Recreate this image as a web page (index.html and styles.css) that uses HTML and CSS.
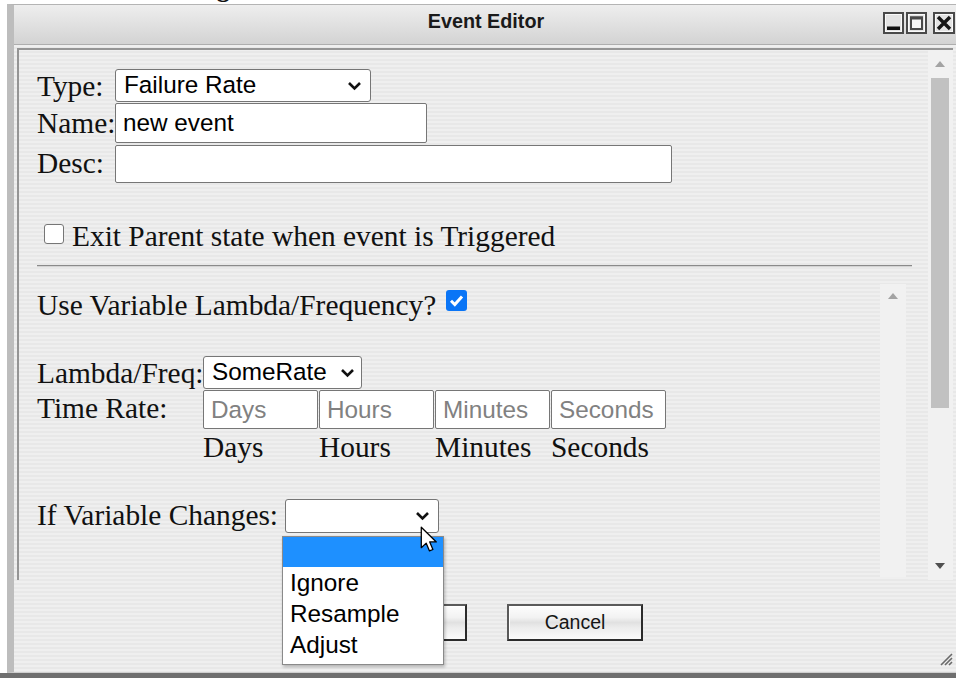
FILE: index.html
```html
<!DOCTYPE html>
<html lang="en">
<head>
<meta charset="utf-8">
<title>Event Editor</title>
<link rel="stylesheet" href="styles.css">
</head>
<body>
<div class="page-head"><span>Event Editing</span></div>

<div class="window">
  <div class="titlebar">
    <div></div>
    <div class="title">Event Editor</div>
    <div class="controls">
      <svg class="ctl" width="21" height="22" viewBox="0 0 21 22">
        <rect x="1" y="1" width="19" height="20" fill="#e4e4e4" stroke="#4a4a4a" stroke-width="2"/>
        <rect x="2.5" y="2.5" width="16" height="17" fill="none" stroke="#fafafa" stroke-width="1"/>
        <rect x="4" y="14.5" width="13" height="3.5" fill="#111"/>
      </svg>
      <svg class="ctl" width="21" height="22" viewBox="0 0 21 22">
        <rect x="1" y="1" width="19" height="20" fill="#e4e4e4" stroke="#4a4a4a" stroke-width="2"/>
        <rect x="2.5" y="2.5" width="16" height="17" fill="none" stroke="#fafafa" stroke-width="1"/>
        <rect x="5" y="5.5" width="11" height="11.5" fill="#f7f7f7" stroke="#4a4a4a" stroke-width="2"/>
        <rect x="4" y="4.5" width="13" height="3" fill="#4a4a4a"/>
      </svg>
      <svg class="ctl ctl-close" width="22" height="22" viewBox="0 0 22 22">
        <rect x="1" y="1" width="20" height="20" fill="#e4e4e4" stroke="#4a4a4a" stroke-width="2"/>
        <rect x="2.5" y="2.5" width="17" height="17" fill="none" stroke="#fafafa" stroke-width="1"/>
        <path d="M5 5 L17 17 M17 5 L5 17" stroke="#161616" stroke-width="3.4"/>
      </svg>
    </div>
  </div>

  <div class="window-body">
    <div class="frame">
      <div class="frame-main">
        <div class="fields">
          <div class="lbl">Type:</div>
          <div class="select sel-type">
            <span>Failure Rate</span>
            <svg class="chev" width="15" height="10" viewBox="0 0 15 10"><path d="M2 2 L7.5 7.5 L13 2" fill="none" stroke="#111" stroke-width="2.6"/></svg>
          </div>
          <div class="lbl">Name:</div>
          <input class="text in-name" type="text" value="new event">
          <div class="lbl">Desc:</div>
          <input class="text in-desc" type="text" value="">
        </div>

        <div class="check-row">
          <span class="box"></span>
          <span>Exit Parent state when event is Triggered</span>
        </div>

        <hr class="sep">

        <div class="sub">
          <div class="sub-main">
            <div class="q-row">
              <span>Use Variable Lambda/Frequency?</span>
              <span class="box checked">
                <svg width="21" height="21" viewBox="0 0 21 21"><path d="M5 10.8 L8.8 14.5 L16 6.5" fill="none" stroke="#fff" stroke-width="3"/></svg>
              </span>
            </div>

            <div class="lambda-row">
              <div class="lbl-wide">Lambda/Freq:</div>
              <div class="select sel-lambda">
                <span>SomeRate</span>
                <svg class="chev" width="15" height="10" viewBox="0 0 15 10"><path d="M2 2 L7.5 7.5 L13 2" fill="none" stroke="#111" stroke-width="2.6"/></svg>
              </div>
            </div>

            <div class="time-row">
              <div class="lbl-wide lbl-time">Time Rate:</div>
              <div class="time-inputs">
                <input class="text t-in" type="text" placeholder="Days">
                <input class="text t-in" type="text" placeholder="Hours">
                <input class="text t-in" type="text" placeholder="Minutes">
                <input class="text t-in" type="text" placeholder="Seconds">
              </div>
            </div>

            <div class="units-row">
              <span>Days</span><span>Hours</span><span>Minutes</span><span>Seconds</span>
            </div>

            <div class="if-row">
              <span class="if-lbl">If Variable Changes:</span>
              <div class="select-wrap">
                <div class="select sel-if">
                  <span></span>
                  <svg class="chev" width="15" height="10" viewBox="0 0 15 10"><path d="M2 2 L7.5 7.5 L13 2" fill="none" stroke="#111" stroke-width="2.6"/></svg>
                </div>
                <ul class="dropdown">
                  <li class="hl">&nbsp;</li>
                  <li>Ignore</li>
                  <li>Resample</li>
                  <li>Adjust</li>
                </ul>
                <svg class="cursor" width="19" height="27" viewBox="0 0 16 23">
                  <path d="M1 1 L1 18.5 L5.2 14.6 L8 21.2 L10.9 20 L8.2 13.6 L13.8 13.6 Z" fill="#fff" stroke="#000" stroke-width="1.1" stroke-linejoin="round"/>
                </svg>
              </div>
            </div>
          </div>
          <div class="sub-scroll">
            <div class="arrow-box"><svg width="10" height="6" viewBox="0 0 10 6"><path d="M0 6 L5 0 L10 6 Z" fill="#a3a3a3"/></svg></div>
          </div>
        </div>
      </div>

      <div class="vscroll">
        <div class="arrow-box up"><svg width="10" height="6" viewBox="0 0 10 6"><path d="M0 6 L5 0 L10 6 Z" fill="#a3a3a3"/></svg></div>
        <div class="thumb"></div>
        <div class="track-rest"></div>
        <div class="arrow-box down"><svg width="10" height="6" viewBox="0 0 10 6"><path d="M0 0 L10 0 L5 6 Z" fill="#505050"/></svg></div>
      </div>
    </div>

    <div class="footer">
      <button class="btn" type="button">OK</button>
      <button class="btn" type="button">Cancel</button>
    </div>
  </div>

  <svg class="grip" width="14" height="14" viewBox="0 0 14 14">
    <path d="M13 2 L2 13 M13 6 L6 13 M13 10 L10 13" stroke="#6a6a6a" stroke-width="1.6"/>
  </svg>
</div>

<div class="backdrop"></div>
</body>
</html>
```

FILE: styles.css
```css
html, body {
  margin: 0;
  height: 100%;
  overflow: hidden;
}

body {
  background: #fff;
  font-family: "Liberation Serif", "Times New Roman", serif;
  color: #111;
}

/* heading of the page behind the dialog, only its descenders peek out */
.page-head {
  height: 4px;
  overflow: hidden;
}
.page-head span {
  display: block;
  font: bold 26px/26px "Liberation Serif", serif;
  margin-top: -24px;
  padding-left: 76px;
}

/* dialog window */
.window {
  position: relative;
  margin-left: 7px;
  width: 942px;
  height: 667px;
  border-top: 1px solid #b4b4b4;
  border-left: 7px solid #bdbdbd;
  border-bottom: 1px solid #cfcfcf;
  display: flex;
  flex-direction: column;
  background: repeating-linear-gradient(to bottom, #efefef 0 2px, #e8e8e8 2px 4px);
}

.titlebar {
  height: 39px;
  flex: none;
  border-bottom: 1px solid #aeaeae;
  background: linear-gradient(to bottom, #eeeeee, #d3d3d3);
  display: grid;
  grid-template-columns: 1fr auto 1fr;
}
.title {
  padding-top: 4px;
  padding-left: 2px;
  font: bold 19.8px/24px "Liberation Sans", Arial, sans-serif;
  color: #1a1a1a;
}
.controls {
  justify-self: end;
  display: flex;
  padding-top: 7px;
  padding-right: 1px;
}
.ctl { display: block; margin-left: 2px; }
.ctl-close { margin-left: 6px; }

.window-body {
  flex: 1;
  padding: 3px 3px 0 3px;
  display: flex;
  flex-direction: column;
}

.frame {
  height: 530px;
  flex: none;
  border-top: 2px solid #959595;
  border-left: 2px solid #959595;
  display: flex;
}

.frame-main {
  flex: 1;
  padding: 19px 16px 0 18px;
}

/* top fields */
.fields {
  display: grid;
  grid-template-columns: 78px auto;
  grid-template-rows: 33px 40px 38px;
  row-gap: 1px;
  align-items: center;
}
.lbl {
  font-size: 29.4px;
  line-height: 33px;
  white-space: nowrap;
  padding-top: 1px;
}

.select {
  box-sizing: border-box;
  display: flex;
  align-items: center;
  justify-content: space-between;
  background: #fff;
  border: 1px solid #767676;
  border-radius: 3px;
  font: 24.3px/1 "Liberation Sans", Arial, sans-serif;
  color: #000;
  padding: 0 8px;
}
.chev { display: block; flex: none; }
.sel-type { width: 256px; height: 33px; }
.sel-lambda { width: 159px; height: 33px; padding-right: 6px; }
.sel-if { width: 154px; height: 34px; padding-right: 8px; }

.text {
  box-sizing: border-box;
  display: block;
  margin: 0;
  border: 1px solid #767676;
  border-radius: 2px;
  background: #fff;
  font: 24.3px "Liberation Sans", Arial, sans-serif;
  color: #000;
  padding: 0 7px;
  outline: none;
}
.text::placeholder { color: #818181; }
.in-name { width: 312px; height: 40px; }
.in-desc { width: 557px; height: 38px; margin-top: 1px; }

.check-row {
  margin-top: 38px;
  height: 33px;
  display: flex;
  align-items: flex-start;
  font-size: 29.4px;
  line-height: 33px;
}
.box {
  box-sizing: border-box;
  display: inline-block;
  width: 20px;
  height: 20px;
  border: 1px solid #767676;
  border-radius: 3px;
  background: #fff;
  flex: none;
}
.check-row .box { margin: 4px 8px 0 7px; }

.sep {
  margin: 12px 0 0;
  height: 0;
  border: 0;
  border-top: 1px solid #8a8a8a;
  border-bottom: 1px solid #d4d4d4;
}

/* lambda sub-panel */
.sub {
  margin-top: 17px;
  width: 869px;
  height: 293px;
  display: flex;
}
.sub-main {
  flex: 1;
  padding-top: 5px;
  font-size: 29.4px;
  line-height: 33px;
}
.sub-scroll {
  width: 26px;
  background: #f1f1f1;
}
.sub-scroll .arrow-box { height: 24px; }

.q-row {
  display: flex;
  align-items: flex-start;
  height: 33px;
}
.box.checked {
  width: 21px;
  height: 21px;
  margin: 1px 0 0 10px;
  border: 0;
  background: #0a75f6;
}
.box.checked svg { display: block; }

.lambda-row {
  margin-top: 34px;
  display: flex;
  align-items: center;
  height: 33px;
}
.lbl-wide {
  width: 166px;
  flex: none;
  white-space: nowrap;
}
.lambda-row .lbl-wide { padding-top: 2px; }

.time-row {
  margin-top: 1px;
  display: flex;
  align-items: flex-start;
}
.lbl-time { padding-top: 2px; }
.time-inputs {
  display: flex;
  gap: 1px;
}
.t-in { width: 115px; height: 39px; }

.units-row {
  margin-top: 2px;
  display: flex;
  padding-left: 166px;
  height: 33px;
}
.units-row span { width: 116px; }

.if-row {
  margin-top: 35px;
  display: flex;
  align-items: flex-start;
}
.if-lbl { white-space: nowrap; }
.select-wrap {
  position: relative;
  margin: 0 0 0 7px;
}

/* open option list of the select */
.dropdown {
  position: absolute;
  z-index: 5;
  top: 37px;
  left: -3px;
  width: 162px;
  box-sizing: border-box;
  margin: 0;
  padding: 0 0 4px;
  list-style: none;
  background: #fff;
  border: 1px solid #8a8a8a;
  box-shadow: 1px 2px 3px rgba(0, 0, 0, 0.25);
  font: 24.3px/31px "Liberation Sans", Arial, sans-serif;
  color: #000;
}
.dropdown li { padding-left: 7px; height: 31px; }
.dropdown li.hl { background: #1e90ff; height: 30px; }

.cursor {
  position: absolute;
  z-index: 6;
  left: 135px;
  top: 27px;
}

/* scrollbars */
.vscroll {
  width: 25px;
  flex: none;
  display: flex;
  flex-direction: column;
  background: #f1f1f1;
}
.arrow-box {
  display: flex;
  align-items: center;
  justify-content: center;
  flex: none;
}
.vscroll .arrow-box { height: 28px; padding-right: 1px; }
.thumb {
  height: 330px;
  margin: 0 4px 0 3px;
  background: #c1c1c1;
}
.track-rest { flex: 1; }

/* button row */
.footer {
  flex: 1;
  display: flex;
  justify-content: center;
  align-items: flex-start;
  gap: 40px;
  padding-top: 24px;
  padding-left: 4px;
}
.btn {
  width: 136px;
  height: 37px;
  margin: 0;
  padding: 0;
  box-sizing: border-box;
  border: 2px solid #2b2b2b;
  border-top-color: #5a5a5a;
  border-left-color: #5a5a5a;
  background: linear-gradient(to bottom, #fdfdfd 0%, #f2f2f2 35%, #e1e1e1 50%, #ececec 65%, #fbfbfb 100%);
  box-shadow: inset 1px 1px 0 #fff;
  font: 19.5px "Liberation Sans", Arial, sans-serif;
  color: #151515;
}

.grip {
  position: absolute;
  right: 3px;
  bottom: 6px;
}

.backdrop {
  height: 10px;
  background: #6f6f6f;
}
```
